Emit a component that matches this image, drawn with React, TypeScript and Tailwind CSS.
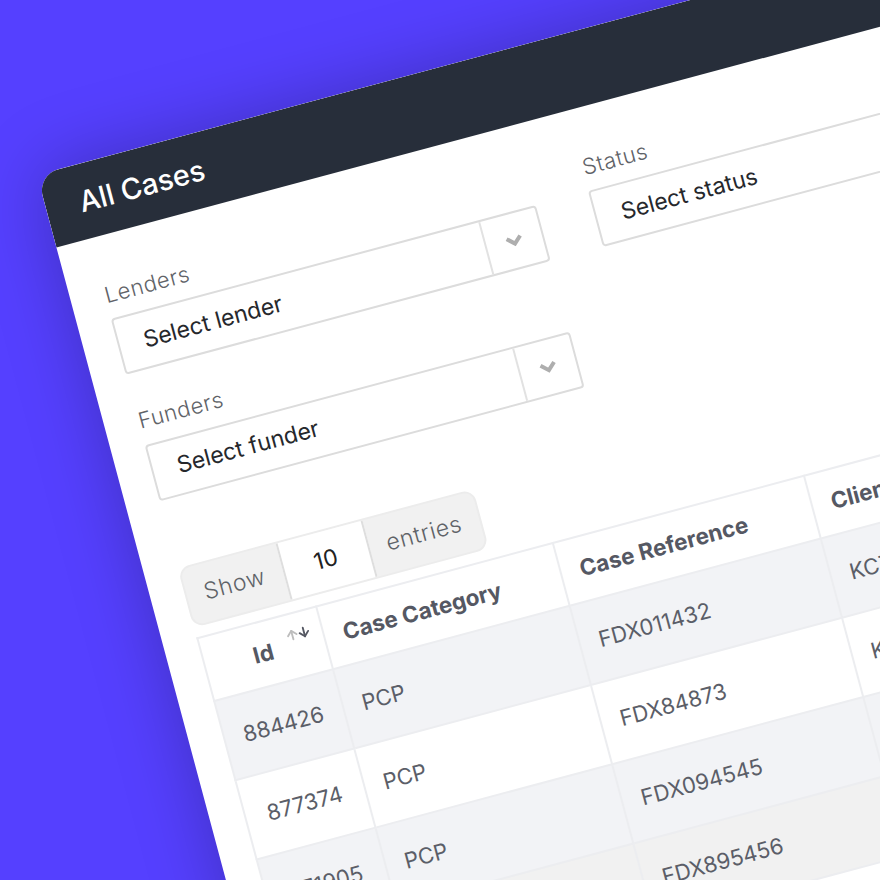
import { ArrowDown, ArrowUp } from "lucide-react";

const rows = [
  { id: "884426", category: "PCP", reference: "FDX011432", client: "KCT1187", bg: "bg-[#f2f3f6]" },
  { id: "877374", category: "PCP", reference: "FDX84873", client: "KCT2045", bg: "bg-white" },
  { id: "871905", category: "PCP", reference: "FDX094545", client: "KCT3312", bg: "bg-[#f2f3f6]" },
  { id: "868120", category: "PCP", reference: "FDX895456", client: "KCT4120", bg: "bg-[#f1f1f1]" },
];

function SelectBox({ label, placeholder, arrow }: { label: string; placeholder: string; arrow?: boolean }) {
  return (
    <div className="mb-[33px]">
      <label className="mb-[9.5px] block pl-[1px] text-[22px] leading-[30px] font-light tracking-[0.025em] text-[#5f6368]">{label}</label>
      <div className="flex h-[58px] items-stretch rounded-[4px] border-2 border-[#dcdcdc] bg-white">
        <div className="flex flex-1 items-center pl-[25px] text-[23px] text-[#26282c]">{placeholder}</div>
        {arrow && (
          <div className="flex w-[58px] items-center justify-center border-l-2 border-[#e2e2e2]">
            <svg width="18" height="12" viewBox="0 0 18 12" fill="none">
              <path d="M2 2.5 9 9l7-6.5" stroke="#aeaeae" strokeWidth="4" />
            </svg>
          </div>
        )}
      </div>
    </div>
  );
}

export default function App() {
  return (
    <div className="h-[880px] w-[880px] overflow-hidden bg-[#5540ff] font-['Inter',sans-serif]">
      <div className="mt-[175px] ml-[36.5px] h-[1100px] w-[1150px] origin-top-left -rotate-[15deg] overflow-hidden rounded-tl-[22px] bg-white shadow-[0_0_70px_rgba(0,0,0,0.25)]">
        <div className="flex h-[75px] items-center bg-[#272e3a] pl-[34px] text-[29px] font-medium text-white">All Cases</div>

        <div className="px-[33.5px] pt-[43.5px]">
          <div className="grid grid-cols-[440px_440px] gap-x-[54.5px]">
            <div>
              <SelectBox label="Lenders" placeholder="Select lender" arrow />
              <SelectBox label="Funders" placeholder="Select funder" arrow />
            </div>
            <div>
              <SelectBox label="Status" placeholder="Select status" />
            </div>
          </div>

          <div className="mt-[36px] flex h-[62px] w-[306px] rounded-[12px] border-2 border-[#ececec] bg-[#f1f1f1] text-[23px] text-[#5f6368]">
            <div className="flex w-[99px] items-center justify-center font-light tracking-[0.03em]">Show</div>
            <div className="flex w-[90px] items-center justify-center border-x-2 border-[#dedede] bg-white text-[#222]">10</div>
            <div className="flex flex-1 items-center justify-center font-light tracking-[0.03em]">entries</div>
          </div>

          <table className="mt-[10px] w-[1000px] table-fixed border-collapse text-[22px] text-[#5b5e68]">
            <colgroup>
              <col className="w-[123px]" />
              <col className="w-[245px]" />
              <col className="w-[260px]" />
              <col />
            </colgroup>
            <thead>
              <tr className="h-[65px] text-left text-[22.5px] font-bold text-[#555863]">
                <th className="border-2 border-[#ecedf0] pl-[49px]">
                  <div className="flex items-center">
                    <span>Id</span>
                    <span className="mb-[22px] ml-[15px] flex">
                      <ArrowUp size={15} strokeWidth={3} className="text-[#bdbdbd]" />
                      <ArrowDown size={15} strokeWidth={3} className="-ml-[3px] text-[#555863]" />
                    </span>
                  </div>
                </th>
                <th className="border-2 border-[#ecedf0] px-[19px]">Case Category</th>
                <th className="border-2 border-[#ecedf0] px-[19px]">Case Reference</th>
                <th className="border-2 border-[#ecedf0] px-[19px]">Client Reference</th>
              </tr>
            </thead>
            <tbody>
              {rows.map((row) => (
                <tr key={row.id} className={`h-[82px] ${row.bg}`}>
                  <td className="border-2 border-[#ecedf0] text-center">{row.id}</td>
                  <td className="border-2 border-[#ecedf0] px-[19px]">{row.category}</td>
                  <td className="border-2 border-[#ecedf0] px-[19px]">{row.reference}</td>
                  <td className="border-2 border-[#ecedf0] px-[19px]">{row.client}</td>
                </tr>
              ))}
            </tbody>
          </table>
        </div>
      </div>
    </div>
  );
}
